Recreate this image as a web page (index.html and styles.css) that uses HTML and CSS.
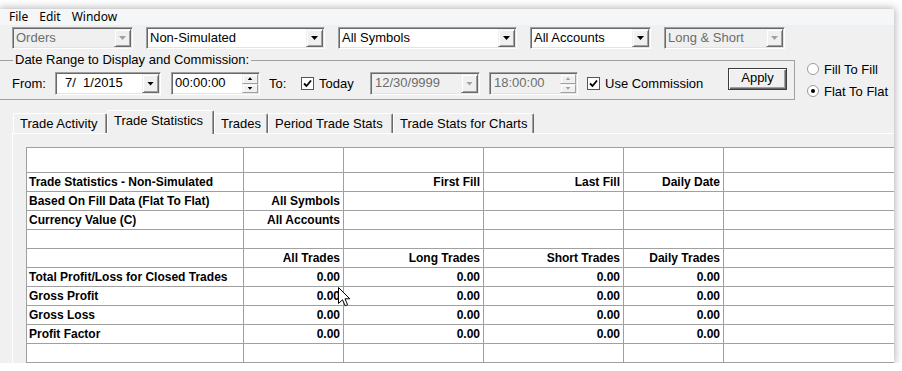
FILE: index.html
```html
<!DOCTYPE html>
<html lang="en">
<head>
  <meta charset="UTF-8" />
  <title>Trade Performance</title>
  <link rel="stylesheet" href="styles.css">
</head>
<body>

  <div class="window">
    <div class="menubar">
      <span class="menu-item">File</span>
      <span class="menu-item">Edit</span>
      <span class="menu-item">Window</span>
    </div>

    <!-- top filter combos -->
    <div class="filter-row">
      <div class="combo disabled w-small"><span class="combo-text">Orders</span><span class="drop-btn"><i class="arrow"></i></span></div>
      <div class="combo w-wide"><span class="combo-text">Non-Simulated</span><span class="drop-btn"><i class="arrow"></i></span></div>
      <div class="combo w-wide"><span class="combo-text">All Symbols</span><span class="drop-btn"><i class="arrow"></i></span></div>
      <div class="combo w-small"><span class="combo-text">All Accounts</span><span class="drop-btn"><i class="arrow"></i></span></div>
      <div class="combo disabled w-small"><span class="combo-text">Long &amp; Short</span><span class="drop-btn"><i class="arrow"></i></span></div>
    </div>

    <div class="range-row">
      <fieldset class="range-box">
        <legend>Date Range to Display and Commission:</legend>
        <div class="range-controls">
          <span class="lbl lbl-from">From:</span>
          <div class="combo date-field"><span class="combo-text date-text">7/&#8199;1/2015</span><span class="drop-btn"><i class="arrow"></i></span></div>
          <div class="combo time-field"><span class="combo-text">00:00:00</span><span class="spin"><span class="spin-btn"><i class="tri up"></i></span><span class="spin-btn"><i class="tri"></i></span></span></div>
          <span class="lbl lbl-to">To:</span>
          <svg class="check" width="13" height="13" viewBox="0 0 13 13">
            <rect x="0.5" y="0.5" width="12" height="12" fill="#fff" stroke="#555"/>
            <path d="M3 6.5 L5.5 9 L10 3.5" fill="none" stroke="#000" stroke-width="1.8"/>
          </svg>
          <span class="lbl lbl-today">Today</span>
          <div class="combo disabled date-field end-date"><span class="combo-text">12/30/9999</span><span class="drop-btn"><i class="arrow"></i></span></div>
          <div class="combo disabled time-field end-time"><span class="combo-text">18:00:00</span><span class="spin"><span class="spin-btn"><i class="tri up"></i></span><span class="spin-btn"><i class="tri"></i></span></span></div>
          <svg class="check commission" width="13" height="13" viewBox="0 0 13 13">
            <rect x="0.5" y="0.5" width="12" height="12" fill="#fff" stroke="#555"/>
            <path d="M3 6.5 L5.5 9 L10 3.5" fill="none" stroke="#000" stroke-width="1.8"/>
          </svg>
          <span class="lbl lbl-commission">Use Commission</span>
          <button class="btn-apply">Apply</button>
        </div>
      </fieldset>

      <div class="fill-mode">
        <label class="radio">
          <svg width="12" height="12" viewBox="0 0 12 12"><circle cx="6" cy="6" r="5.5" fill="#fff" stroke="#9a9a9a"/></svg>
          Fill To Fill
        </label>
        <label class="radio">
          <svg width="12" height="12" viewBox="0 0 12 12"><circle cx="6" cy="6" r="5.5" fill="#fff" stroke="#9a9a9a"/><circle cx="6" cy="6" r="2" fill="#000"/></svg>
          Flat To Flat
        </label>
      </div>
    </div>

    <div class="tab-strip">
      <span class="tab t-activity">Trade Activity</span>
      <span class="tab t-stats active">Trade Statistics</span>
      <span class="tab t-trades">Trades</span>
      <span class="tab t-period">Period Trade Stats</span>
      <span class="tab t-charts">Trade Stats for Charts</span>
    </div>

    <div class="tab-panel">
      <div class="stats-grid">
        <div class="cell"></div><div class="cell"></div><div class="cell"></div><div class="cell"></div><div class="cell"></div><div class="cell"></div>

        <div class="cell">Trade Statistics - Non-Simulated</div><div class="cell"></div><div class="cell num">First Fill</div><div class="cell num">Last Fill</div><div class="cell num">Daily Date</div><div class="cell"></div>
        <div class="cell">Based On Fill Data (Flat To Flat)</div><div class="cell num">All Symbols</div><div class="cell"></div><div class="cell"></div><div class="cell"></div><div class="cell"></div>
        <div class="cell">Currency Value (C)</div><div class="cell num">All Accounts</div><div class="cell"></div><div class="cell"></div><div class="cell"></div><div class="cell"></div>
        <div class="cell"></div><div class="cell"></div><div class="cell"></div><div class="cell"></div><div class="cell"></div><div class="cell"></div>

        <div class="cell"></div><div class="cell num">All Trades</div><div class="cell num">Long Trades</div><div class="cell num">Short Trades</div><div class="cell num">Daily Trades</div><div class="cell"></div>
        <div class="cell">Total Profit/Loss for Closed Trades</div><div class="cell num">0.00</div><div class="cell num">0.00</div><div class="cell num">0.00</div><div class="cell num">0.00</div><div class="cell"></div>
        <div class="cell">Gross Profit</div><div class="cell num">0.00</div><div class="cell num">0.00</div><div class="cell num">0.00</div><div class="cell num">0.00</div><div class="cell"></div>
        <div class="cell">Gross Loss</div><div class="cell num">0.00</div><div class="cell num">0.00</div><div class="cell num">0.00</div><div class="cell num">0.00</div><div class="cell"></div>
        <div class="cell">Profit Factor</div><div class="cell num">0.00</div><div class="cell num">0.00</div><div class="cell num">0.00</div><div class="cell num">0.00</div><div class="cell"></div>
        <div class="cell"></div><div class="cell"></div><div class="cell"></div><div class="cell"></div><div class="cell"></div><div class="cell"></div>
      </div>
    </div>

    <!-- mouse pointer sitting over the grid -->
    <svg class="pointer" width="13" height="20" viewBox="0 0 13 20">
      <path d="M0.5 0.5 L0.5 16.5 L4.5 12.8 L7.2 18.8 L9.6 17.7 L7 11.8 L11.8 11.8 Z" fill="#fff" stroke="#000" stroke-linejoin="round"/>
    </svg>
  </div>

</body>
</html>
```

FILE: styles.css
```css
* {
  box-sizing: border-box;
}

body {
  margin: 0;
  background: #fff;
  font-family: "Liberation Sans", Arial, sans-serif;
  font-size: 13px;
  color: #000;
  overflow: hidden;
}

.window {
  position: relative;
  width: 894px;
  height: 354px;
  margin-top: 9px;
  background: #f0f0f0;
  box-shadow: 0 0 8px 1px rgba(0, 0, 0, 0.3);
  overflow: hidden;
}

.menubar {
  display: flex;
  height: 16px;
  padding-left: 9px;
  background: #f5f6f7;
  font-family: "Noto Sans", sans-serif;
  font-size: 12px;
  line-height: 16px;
}

.menu-item {
  margin-right: 11px;
}

/* combo boxes */
.filter-row {
  display: flex;
  gap: 13px;
  padding: 2px 0 0 12px;
}

.combo {
  display: flex;
  height: 22px;
  padding: 1px;
  background: #fff;
  border: 1px solid;
  border-color: #a0a0a0 #fff #fff #a0a0a0;
  box-shadow: inset 1px 1px 0 #696969, inset -1px -1px 0 #e3e3e3;
}

.w-small {
  width: 121px;
}

.w-wide {
  width: 179px;
}

.combo-text {
  flex: 1;
  padding-left: 2px;
  line-height: 18px;
  white-space: pre;
  overflow: hidden;
}

.combo.disabled {
  background: #f0f0f0;
  color: #6d6d6d;
}

.drop-btn {
  display: flex;
  align-items: center;
  justify-content: center;
  width: 17px;
  background: #f0f0f0;
  border: 1px solid;
  border-color: #f0f0f0 #696969 #696969 #f0f0f0;
  box-shadow: inset 1px 1px 0 #fff, inset -1px -1px 0 #a0a0a0;
}

.arrow {
  display: block;
  width: 7px;
  height: 4px;
  background: #000;
  clip-path: polygon(0 0, 100% 0, 50% 100%);
}

.disabled .arrow,
.disabled .tri {
  background: #a0a0a0;
}

/* date range group */
.range-row {
  display: flex;
  margin-top: 4px;
}

.range-box {
  width: 795px;
  min-width: 0;
  margin: 0;
  padding: 0 0 4px 0;
  border: 1px solid #a0a0a0;
  border-left: none;
}

.range-box legend {
  margin-left: 13px;
  padding: 0 2px;
  font-size: 13px;
  line-height: 14px;
}

.range-controls {
  display: flex;
  align-items: center;
  height: 23px;
  margin-top: 5px;
  padding: 0 7px 0 12px;
}

.lbl {
  line-height: 16px;
}

.lbl-from {
  width: 43px;
}

.date-field {
  width: 106px;
  height: 23px;
}

.date-text {
  padding-left: 8px;
}

.time-field {
  width: 89px;
  height: 23px;
  margin-left: 10px;
}

.lbl-to {
  width: 32px;
  margin-left: 9px;
}

.check {
  flex: none;
}

.lbl-today {
  width: 51px;
  margin-left: 5px;
}

.end-date {
  width: 110px;
}

.end-date .combo-text,
.end-time .combo-text {
  padding-left: 3px;
}

.end-time {
  margin-left: 9px;
}

.commission {
  margin-left: 9px;
}

.lbl-commission {
  margin-left: 5px;
}

.spin {
  display: flex;
  flex-direction: column;
  width: 16px;
}

.spin-btn {
  display: flex;
  flex: 1;
  align-items: center;
  justify-content: center;
  background: #f0f0f0;
  border: 1px solid;
  border-color: #f0f0f0 #a0a0a0 #a0a0a0 #f0f0f0;
  box-shadow: inset 1px 1px 0 #fff;
}

.tri {
  display: block;
  width: 5px;
  height: 3px;
  background: #000;
  clip-path: polygon(0 0, 100% 0, 50% 100%);
}

.tri.up {
  clip-path: polygon(50% 0, 100% 100%, 0 100%);
}

.btn-apply {
  align-self: flex-start;
  width: 59px;
  height: 22px;
  margin: -4px 0 0 auto;
  padding: 0 0 2px;
  background: #f0f0f0;
  border: 1px solid #3c3c3c;
  box-shadow: inset 1px 1px 0 #fff, inset -1px -1px 0 #696969, inset -2px -2px 0 #a0a0a0;
  font-family: "Liberation Sans", Arial, sans-serif;
  font-size: 13px;
  line-height: 18px;
  color: #000;
}

.fill-mode {
  display: flex;
  flex-direction: column;
  gap: 6px;
  margin-left: 12px;
  padding-top: 8px;
}

.radio {
  display: flex;
  align-items: center;
  gap: 5px;
  height: 16px;
  white-space: nowrap;
}

/* tabs */
.tab-strip {
  position: relative;
  z-index: 1;
  display: flex;
  align-items: flex-end;
  height: 23px;
  margin-top: 10px;
  padding-left: 13px;
}

.tab {
  height: 20px;
  padding: 0 6px;
  border: 1px solid;
  border-color: #fff #696969 transparent #fff;
  border-bottom: none;
  border-radius: 2px 2px 0 0;
  box-shadow: inset -1px 0 0 #a0a0a0;
  line-height: 19px;
  white-space: nowrap;
}

.tab.active {
  height: 24px;
  margin-bottom: -1px;
  background: #f0f0f0;
  line-height: 19px;
}

.t-activity { width: 94px; }
.t-stats { width: 107px; }
.t-trades { width: 54px; }
.t-period { width: 125px; }
.t-charts { width: 141px; }

.tab-panel {
  height: 230px;
  margin-left: 12px;
  padding: 13px 0 0 13px;
  border-top: 1px solid #fff;
  border-left: 1px solid #fff;
}

/* statistics grid */
.stats-grid {
  display: grid;
  grid-template-columns: 216px 99px 139px 139px 99px 1fr;
  grid-template-rows: 24px repeat(10, 18px);
  gap: 1px;
  background: #a0a0a0;
  border: 1px solid #a0a0a0;
  border-right: none;
}

.cell {
  padding: 0 3px 0 2px;
  background: #fff;
  font-size: 12px;
  font-weight: bold;
  line-height: 18px;
  white-space: nowrap;
  overflow: hidden;
}

.cell.num {
  text-align: right;
}

.pointer {
  position: absolute;
  left: 338px;
  top: 278px;
}
```
